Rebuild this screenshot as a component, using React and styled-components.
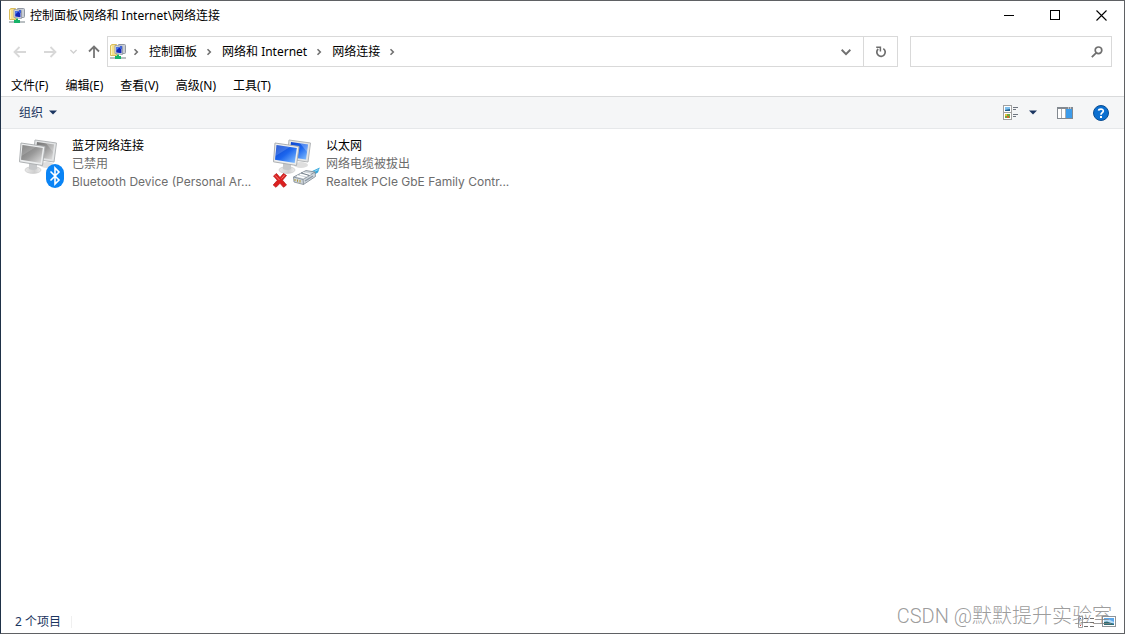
import React, { useState } from 'react'
import styled, { createGlobalStyle } from 'styled-components'

const MENUS = ['文件(F)', '编辑(E)', '查看(V)', '高级(N)', '工具(T)'];
const CRUMBS = ['控制面板', '网络和 Internet', '网络连接'];

const CONNECTIONS = [
  {
    id: 'bluetooth',
    name: '蓝牙网络连接',
    status: '已禁用',
    device: 'Bluetooth Device (Personal Ar...',
  },
  {
    id: 'ethernet',
    name: '以太网',
    status: '网络电缆被拔出',
    device: 'Realtek PCIe GbE Family Contr...',
  },
];

function NetworkFolderIcon() {
  return (
    <svg width="16" height="16" viewBox="0 0 16 16" aria-hidden="true">
      <path d="M0.5 1.5 L2 0.5 H6.5 V11.5 H0.5Z" fill="#f6e08a" stroke="#d9bd5c" />
      <path d="M1.5 2V11" stroke="#fdf3bd" />
      <rect x="8" y="0.5" width="7.5" height="9" rx="1" fill="#c9ced6" stroke="#9298a3" />
      <path d="M5 1.5 L12.5 2.5 V10.5 L5 9.5Z" fill="#e4e7ec" stroke="#9aa0aa" />
      <path d="M6.2 3 L11.5 3.6 V9.3 L6.2 8.5Z" fill="#1226b8" />
      <path d="M6.2 3 L9.5 3.4 L6.2 6.5Z" fill="#4f7ff0" />
      <rect x="10" y="2" width="2" height="3" fill="#3d61d8" />
      <rect x="0" y="13" width="16" height="2" fill="#b9bfc2" />
      <path d="M7 10.5H9V12H11V15H5V12H7Z" fill="#16b368" />
    </svg>
  );
}

// The two stacked monitors shared by every adapter
function Monitors({ id, enabled }) {
  const dark = enabled ? '#0a3fc8' : '#707070';
  const mid = enabled ? '#1c66ee' : '#999999';
  const light = enabled ? '#8cc6ff' : '#e2e2e2';
  return (
    <>
      <defs>
        <linearGradient id={`${id}-screen`} x1="0" y1="0" x2="1" y2="1">
          <stop offset="0" stopColor={dark} />
          <stop offset="0.5" stopColor={mid} />
          <stop offset="1" stopColor={light} />
        </linearGradient>
        <linearGradient id={`${id}-base`} x1="0" y1="0" x2="1" y2="0">
          <stop offset="0" stopColor="#e9e9e9" />
          <stop offset="0.6" stopColor="#cfcfcf" />
          <stop offset="1" stopColor="#eeeeee" />
        </linearGradient>
      </defs>
      <ellipse cx="29" cy="26" rx="7" ry="3" fill="#dedede" />
      <path d="M17 1 L38.5 4 L36 23 L15 20Z" fill="#e3e5e6" stroke="#b3b6b8" />
      <path d="M19 3 L36 5.4 L34 20.6 L17 18Z" fill={`url(#${id}-screen)`} />
      <path d="M28 4.3 L36 5.4 L35 13Z" fill="#ffffff" opacity="0.25" />
      <ellipse cx="15" cy="31" rx="8" ry="3.4" fill={`url(#${id}-base)`} stroke="#c4c4c4" strokeWidth="0.6" />
      <path d="M11 24 L19 25.5 L19 30 Q15 32 11 30Z" fill="#c6c8ca" />
      <path d="M3 4 L27 7.5 L24.5 26.5 L1.5 22.8Z" fill="#eceeef" stroke="#adb0b2" />
      <path d="M4.5 6 L24.8 9 L22.7 24 L3 20.8Z" fill={`url(#${id}-screen)`} />
      <path d="M4.5 6 L18 8 L3.5 17Z" fill="#ffffff" opacity="0.16" />
    </>
  );
}

function BluetoothAdapterIcon() {
  return (
    <svg width="48" height="50" viewBox="0 0 48 50" aria-hidden="true">
      <Monitors id="bt" enabled={false} />
      <rect x="28" y="25" width="18" height="24" rx="9" fill="#0a84f5" />
      <path d="M32.5 32.5 L41 41 L37 45 V29 L41 33 L32.5 41.5" fill="none" stroke="#ffffff" strokeWidth="1.6" />
    </svg>
  );
}

function EthernetAdapterIcon() {
  return (
    <svg width="48" height="50" viewBox="0 0 48 50" aria-hidden="true">
      <Monitors id="eth" enabled />
      <path d="M37 33.5 L47.8 28.5 L46 33.5 L40 37Z" fill="#36a7dc" />
      <path d="M40 33.5 L46.5 30.5" stroke="#8fd9f5" />
      <path d="M21.5 38 L34 31.5 L43 33 L43.5 37.5 L31.5 45.5 L22 43Z" fill="#cfd6dc" stroke="#7d8892" strokeWidth="0.8" />
      <path d="M21.5 38 L31 40.5 L43 33 M31 40.5 L31.5 45.5" fill="none" stroke="#7c8791" strokeWidth="0.8" />
      <path d="M25 37 L32.5 38.8 M28 35.4 L35.5 37 M31 33.8 L38.5 35.3" stroke="#ffffff" strokeWidth="1.3" />
      <path d="M29 33.8 L37 36.4" stroke="#5d6a76" strokeWidth="0.8" />
      <path d="M23 40 V42 M25.5 40.5 V42.8 M28 41 V43.6" stroke="#b09a3c" />
      <path d="M33 42 L41 37" stroke="#8b98a4" strokeWidth="1.4" />
      <path d="M1.5 37 L4.5 34.5 L8 38.5 L11.5 34.5 L14.5 36.5 L10.5 41.2 L14.5 46 L11.5 48.3 L8 44.3 L4 48.3 L1.2 46 L5.3 41.3Z" fill="#dc1f1f" stroke="#b51212" strokeWidth="0.7" />
      <path d="M3.2 36.5 L7.5 41 M12.6 36 L9.5 39.5" stroke="#f57b72" />
    </svg>
  );
}

const ADAPTER_ICONS = {
  bluetooth: BluetoothAdapterIcon,
  ethernet: EthernetAdapterIcon,
};

function ArrowIcon({ turn = 0, color }) {
  return (
    <svg width="14" height="14" viewBox="0 0 14 14" aria-hidden="true">
      <path d="M13 7H2 M6.5 2 L1.5 7 L6.5 12" fill="none" stroke={color} strokeWidth="1.8" transform={`rotate(${turn} 7 7)`} />
    </svg>
  );
}

function ChevronIcon({ down, size = 8, color = '#707070' }) {
  return (
    <svg width={size} height={size} viewBox="0 0 8 8" aria-hidden="true">
      <path d={down ? 'M0.5 2.2 L4 5.7 L7.5 2.2' : 'M2.5 1.2 L5.3 4 L2.5 6.8'} fill="none" stroke={color} strokeWidth="1.6" />
    </svg>
  );
}

function TriangleIcon() {
  return (
    <svg width="8" height="5" viewBox="0 0 8 5" aria-hidden="true">
      <path d="M0 0.5H8L4 4.5Z" fill="#1b3560" />
    </svg>
  );
}

function RefreshIcon() {
  return (
    <svg width="12" height="12" viewBox="0 0 12 12" aria-hidden="true">
      <path d="M8.3 2.6 A4.2 4.2 0 1 1 3.2 3" fill="none" stroke="#6d6d6d" strokeWidth="1.7" />
      <path d="M1.2 1.2H5.4V5.4" fill="none" stroke="#6d6d6d" strokeWidth="1.5" />
    </svg>
  );
}

function SearchIcon() {
  return (
    <svg width="12" height="12" viewBox="0 0 12 12" aria-hidden="true">
      <circle cx="7.5" cy="4.3" r="3.3" fill="none" stroke="#6f6f6f" strokeWidth="1.7" />
      <path d="M5.2 6.8 L0.8 11.2" stroke="#6f6f6f" strokeWidth="1.8" />
    </svg>
  );
}

function ViewIcon() {
  return (
    <svg width="16" height="15" viewBox="0 0 16 15" aria-hidden="true">
      <rect x="0.5" y="0.5" width="8" height="14" fill="#ffffff" stroke="#a0a0a0" />
      <path d="M1 7.5H8" stroke="#a0a0a0" />
      <rect x="2" y="2" width="5" height="4" fill="#7fc0ee" />
      <path d="M2 6 V5 L7 4 V6Z" fill="#1f5f8d" />
      <rect x="2" y="9" width="5" height="4" fill="#6da944" />
      <rect x="2" y="9" width="2" height="2" fill="#e9c13c" />
      <rect x="4" y="11" width="2" height="2" fill="#d9622b" />
      <path d="M10 2.5H15 M10 4.5H13 M10 9.5H15 M10 11.5H13" stroke="#6f7680" />
    </svg>
  );
}

function PaneIcon() {
  return (
    <svg width="16" height="12" viewBox="0 0 16 12" aria-hidden="true">
      <rect x="0.5" y="0.5" width="15" height="11" fill="#ffffff" stroke="#838990" />
      <path d="M1 1H15" stroke="#838990" strokeWidth="2" />
      <path d="M4.5 2V11 M8.5 2V11" stroke="#a9adb1" />
      <rect x="9" y="2" width="6" height="9" fill="#3d9be9" />
      <path d="M11 1H12 M13 1H14" stroke="#ffffff" />
    </svg>
  );
}

function HelpIcon() {
  return (
    <svg width="16" height="16" viewBox="0 0 16 16" aria-hidden="true">
      <circle cx="8" cy="8" r="7.5" fill="#0b6fd0" stroke="#0a4d92" />
      <path d="M5.6 5.6 C5.8 3.6 10.4 3.4 10.3 6 C10.2 7.7 8 7.8 8 9.8" fill="none" stroke="#ffffff" strokeWidth="1.7" />
      <rect x="7" y="11" width="2" height="2" fill="#ffffff" />
    </svg>
  );
}

function DetailsIcon() {
  return (
    <svg width="16" height="12" viewBox="0 0 16 12" aria-hidden="true">
      <path d="M0.5 0.5H4.5V11.5H0.5Z M0.5 4H4.5 M0.5 8H4.5" fill="#ffffff" stroke="#a0a0a0" />
      <path d="M2 2.5H3" stroke="#2e6ec0" />
      <path d="M2 9.5H3" stroke="#d43b3b" />
      <path d="M6 2.5H10 M12 2.5H16 M6 6.5H10 M12 6.5H16 M6 10.5H10 M12 10.5H16" stroke="#707070" />
    </svg>
  );
}

function LargeIcon() {
  return (
    <svg width="14" height="11" viewBox="0 0 14 11" aria-hidden="true">
      <rect x="0.5" y="0.5" width="13" height="10" fill="#ffffff" stroke="#8f9499" />
      <rect x="2" y="2" width="10" height="7" fill="#5ba7ea" />
      <path d="M2 4 L6 3 L12 6 V7 H2Z" fill="#b8dcf5" />
      <path d="M2 6 L5 5.5 L12 8 V9 H2Z" fill="#2d6c73" />
    </svg>
  );
}

export default function App() {
  const [query, setQuery] = useState('');

  return (
    <>
      <GlobalStyle />
      <Window>
        <TitleBar>
          <NetworkFolderIcon />
          <Title>控制面板\网络和 Internet\网络连接</Title>
          <CaptionButton aria-label="最小化">
            <svg width="11" height="11" viewBox="0 0 11 11"><path d="M0 5.5H10" stroke="#000" /></svg>
          </CaptionButton>
          <CaptionButton aria-label="最大化">
            <svg width="11" height="11" viewBox="0 0 11 11"><rect x="0.5" y="0.5" width="9" height="9" fill="none" stroke="#000" /></svg>
          </CaptionButton>
          <CaptionButton aria-label="关闭">
            <svg width="11" height="11" viewBox="0 0 11 11"><path d="M0.5 0.5L10.5 10.5M10.5 0.5L0.5 10.5" stroke="#000" strokeWidth="1.1" /></svg>
          </CaptionButton>
        </TitleBar>

        <Navigation>
          <NavButton aria-label="后退" disabled><ArrowIcon color="#d8d8d8" /></NavButton>
          <NavButton aria-label="前进" disabled><ArrowIcon turn={180} color="#d8d8d8" /></NavButton>
          <NavButton aria-label="最近的位置" $narrow disabled><ChevronIcon down size={7} color="#d0d0d0" /></NavButton>
          <NavButton aria-label="向上" $up><ArrowIcon turn={90} color="#757575" /></NavButton>
          <AddressBar>
            <NetworkFolderIcon />
            <Crumbs aria-label="地址">
              <ChevronIcon />
              {CRUMBS.map((crumb) => (
                <React.Fragment key={crumb}>
                  <Crumb href="#">{crumb}</Crumb>
                  <ChevronIcon />
                </React.Fragment>
              ))}
            </Crumbs>
            <AddressButton aria-label="以前的位置"><ChevronIcon down size={10} /></AddressButton>
            <AddressButton aria-label="刷新" $divided><RefreshIcon /></AddressButton>
          </AddressBar>
          <SearchBox>
            <SearchInput aria-label="搜索" value={query} onChange={(e) => setQuery(e.target.value)} />
            <SearchIcon />
          </SearchBox>
        </Navigation>

        <MenuBar>
          {MENUS.map((menu) => (
            <MenuButton key={menu}>{menu}</MenuButton>
          ))}
        </MenuBar>

        <Toolbar>
          <OrganizeButton>组织<TriangleIcon /></OrganizeButton>
          <ToolGroup>
            <ToolButton aria-label="更改视图"><ViewIcon /></ToolButton>
            <ToolButton aria-label="更多选项"><TriangleIcon /></ToolButton>
          </ToolGroup>
          <ToolButton aria-label="显示预览窗格"><PaneIcon /></ToolButton>
          <ToolButton aria-label="帮助"><HelpIcon /></ToolButton>
        </Toolbar>

        <ConnectionList>
          {CONNECTIONS.map((item) => {
            const Icon = ADAPTER_ICONS[item.id];
            return (
              <Connection key={item.id}>
                <Icon />
                <div>
                  <ConnectionName>{item.name}</ConnectionName>
                  <ConnectionInfo>{item.status}</ConnectionInfo>
                  <ConnectionInfo>{item.device}</ConnectionInfo>
                </div>
              </Connection>
            );
          })}
        </ConnectionList>

        <StatusBar>
          <ItemCount>2 个项目</ItemCount>
          <ToolButton aria-label="详细信息"><DetailsIcon /></ToolButton>
          <ToolButton aria-label="大图标"><LargeIcon /></ToolButton>
          <Watermark>CSDN @默默提升实验室</Watermark>
        </StatusBar>
      </Window>
    </>
  );
}

const GlobalStyle = createGlobalStyle`
  * {
    box-sizing: border-box;
  }
  body {
    margin: 0;
    background-color: #ffffff;
    color: #000000;
    font: 12px/18px "Noto Sans", "Noto Sans CJK SC", sans-serif;
  }
  button, input {
    margin: 0;
    padding: 0;
    border: none;
    background: none;
    color: inherit;
    font: inherit;
  }
  svg {
    display: block;
    flex-shrink: 0;
  }
`;

const Window = styled.div`
  display: flex;
  flex-direction: column;
  min-height: 100vh;
  border: 1px solid #5f6164;
  border-left-color: #1f3148;
`;

const TitleBar = styled.header`
  display: flex;
  align-items: center;
  height: 29px;
  padding-left: 8px;
`;

const Title = styled.h1`
  flex: 1;
  margin: 0 0 0 5px;
  font-size: 12px;
  font-weight: 400;
`;

const CaptionButton = styled.button`
  display: flex;
  align-items: center;
  justify-content: center;
  width: 46px;
  height: 29px;
`;

const Navigation = styled.nav`
  display: flex;
  align-items: center;
  padding: 6px 12px 6px 4px;
`;

const NavButton = styled.button`
  display: flex;
  align-items: center;
  justify-content: center;
  width: ${({ $narrow, $up }) => ($narrow ? '16px' : $up ? '26px' : '30px')};
  height: 30px;
`;

const AddressBar = styled.div`
  display: flex;
  flex: 1;
  align-items: center;
  height: 31px;
  padding-left: 2px;
  border: 1px solid #d9d9d9;
`;

const Crumbs = styled.div`
  display: flex;
  flex: 1;
  align-items: center;
  gap: 8px;
  padding-left: 6px;
`;

const Crumb = styled.a`
  padding-left: 1px;
  color: #000000;
  text-decoration: none;
`;

const AddressButton = styled.button`
  display: flex;
  align-items: center;
  justify-content: center;
  width: 34px;
  height: 29px;
  border-left: ${({ $divided }) => ($divided ? '1px solid #d9d9d9' : 'none')};
`;

const SearchBox = styled.label`
  display: flex;
  width: 202px;
  align-items: center;
  height: 31px;
  margin-left: 12px;
  padding: 0 8px;
  border: 1px solid #d9d9d9;
`;

const SearchInput = styled.input`
  flex: 1;
  width: 0;
  min-width: 0;
  outline: none;
`;

const MenuBar = styled.div`
  display: flex;
  align-items: center;
  gap: 17px;
  height: 23px;
  padding: 3px 10px 0;
`;

const MenuButton = styled.button`
  white-space: nowrap;
`;

const Toolbar = styled.div`
  display: flex;
  align-items: center;
  gap: 20px;
  height: 33px;
  padding: 0 15px 0 18px;
  border-top: 1px solid #d9dadb;
  border-bottom: 1px solid #e6e8ea;
  background-color: #f5f6f7;
  color: #1b3560;
`;

const OrganizeButton = styled.button`
  display: flex;
  align-items: center;
  gap: 6px;
  margin-right: auto;
`;

const ToolGroup = styled.div`
  display: flex;
  gap: 10px;
`;

const ToolButton = styled.button`
  display: flex;
  align-items: center;
`;

const ConnectionList = styled.ul`
  display: flex;
  flex: 1;
  flex-wrap: wrap;
  align-content: flex-start;
  margin: 0;
  padding: 8px 17px;
  list-style: none;
`;

const Connection = styled.li`
  display: flex;
  gap: 6px;
  width: 254px;
  white-space: nowrap;
  > svg {
    margin-top: 2px;
  }
`;

const ConnectionName = styled.div`
  color: #000000;
`;

const ConnectionInfo = styled.div`
  color: #6d6d6d;
  font-family: Inter, "Noto Sans CJK SC", sans-serif;
`;

const StatusBar = styled.footer`
  position: relative;
  display: flex;
  align-items: center;
  gap: 8px;
  height: 23px;
  padding: 0 8px 0 14px;
`;

const ItemCount = styled.span`
  margin-right: auto;
  padding-right: 10px;
  border-right: 1px solid #f0f0f0;
  color: #1b3560;
  line-height: 12px;
`;

const Watermark = styled.div`
  position: absolute;
  right: 12px;
  bottom: 3px;
  color: rgba(130, 130, 130, 0.8);
  font: 300 20px/28px Roboto, "Noto Sans CJK SC", sans-serif;
  white-space: nowrap;
  pointer-events: none;
`;
